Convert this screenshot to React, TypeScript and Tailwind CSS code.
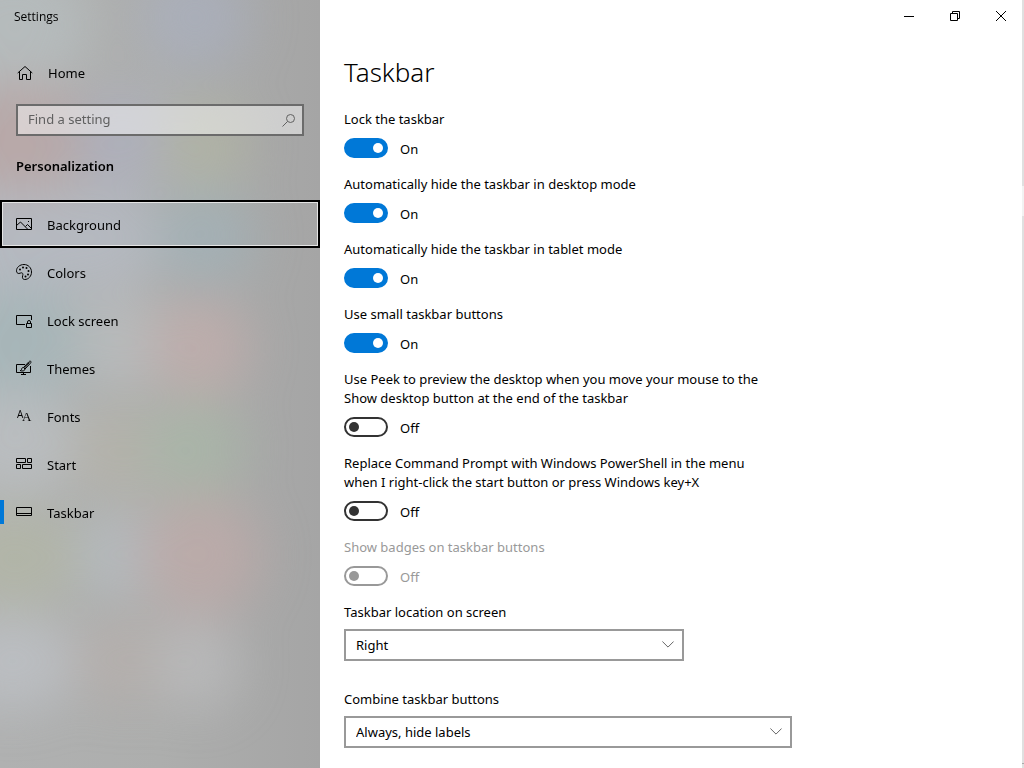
import type { ReactNode } from 'react';

interface NavItem { label: string; icon: ReactNode; current?: boolean; focused?: boolean; }
interface Toggle { id: string; label: string; on?: boolean; disabled?: boolean; }

function Icon({ children }: { children: ReactNode }) {
  return (
    <svg viewBox="0 0 16 16" className="w-4 h-4 shrink-0 overflow-visible" fill="none" stroke="currentColor" strokeWidth="1" aria-hidden="true">
      {children}
    </svg>
  );
}

const navItems: NavItem[] = [
  {
    label: 'Background',
    focused: true,
    icon: (
      <Icon>
        <path d="M.5 2.500h15v11H.5z" />
        <path d="M.5 9.500 4.500 6l7.500 7.500M9.500 10.500l2-2 4 4" />
        <path d="M12 5h1v1h-1z" fill="currentColor" stroke="none" />
      </Icon>
    ),
  },
  {
    label: 'Colors',
    icon: (
      <Icon>
        <path d="M8 .5C3.800.5.500 3.300.500 6.800c0 1.600.9 2.700 2.300 2.700 1.200 0 1.600-.7 2.600-.7 1.100 0 1.500.8 1.500 1.700 0 1-.5 1.500-.5 2.700 0 1.400 1 2.300 2.300 2.300 3.800 0 6.800-3.300 6.800-7.500S12.200.5 8 .5z" />
        <g fill="currentColor" stroke="none">
          <circle cx="4" cy="5.500" r="1" />
          <circle cx="7" cy="3.500" r="1" />
          <circle cx="10.500" cy="4" r="1" />
          <circle cx="12.500" cy="7" r="1" />
          <circle cx="12" cy="10.500" r="1" />
          <circle cx="9.500" cy="12.500" r="1" />
        </g>
      </Icon>
    ),
  },
  {
    label: 'Lock screen',
    icon: (
      <Icon>
        <path d="M9 12.500H.5v-9h15V8" />
        <path d="M10.500 11.500h5v4h-5z" />
        <path d="M11.500 11.500V10a1.500 1.500 0 0 1 3 0v1.500" />
      </Icon>
    ),
  },
  {
    label: 'Themes',
    icon: (
      <Icon>
        <path d="M9 4.500H.5v8h14V6M7.500 12.500v2M5 14.500h5" />
        <path d="M14.700 1.300c-.7-.5-1.300 0-2 .7L7.500 7.500l1.500 1.500 5.300-5.600c.6-.7 1-1.500.4-2.100z" />
        <path d="M7.500 7.500c-1.500 0-2 1-2 2s-.8 1-1.500 1c2 1 5 .5 5-1.500" />
        <path d="m13.500 2.500-5 5.500" />
      </Icon>
    ),
  },
  {
    label: 'Fonts',
    icon: (
      <svg viewBox="0 0 16 16" className="w-4 h-4 shrink-0 overflow-visible" fill="currentColor" aria-hidden="true">
        <text x="1" y="10" fontSize="10" fontFamily="Open Sans, sans-serif">A</text>
        <text x="6" y="13" fontSize="13" fontFamily="Liberation Serif, serif">A</text>
      </svg>
    ),
  },
  {
    label: 'Start',
    icon: (
      <Icon>
        <path d="M.5 2.500h9v4h-9zM11.500 2.500h4v4h-4zM.5 8.500h4v4h-4zM6.500 8.500h9v4h-9z" />
      </Icon>
    ),
  },
  {
    label: 'Taskbar',
    current: true,
    icon: (
      <Icon>
        <path d="M.5 3.500h15v8H.5zM.5 9.500h15" />
      </Icon>
    ),
  },
];

const toggles: Toggle[] = [
  { id: 'lock', label: 'Lock the taskbar', on: true },
  { id: 'hide-desktop', label: 'Automatically hide the taskbar in desktop mode', on: true },
  { id: 'hide-tablet', label: 'Automatically hide the taskbar in tablet mode', on: true },
  { id: 'small-buttons', label: 'Use small taskbar buttons', on: true },
  { id: 'peek', label: 'Use Peek to preview the desktop when you move your mouse to the Show desktop button at the end of the taskbar' },
  { id: 'powershell', label: 'Replace Command Prompt with Windows PowerShell in the menu when I right-click the start button or press Windows key+X' },
  { id: 'badges', label: 'Show badges on taskbar buttons', disabled: true },
];

// soft colours of the desktop showing through the acrylic sidebar
const glows = [
  'left-[-60px] top-[-40px] w-[150px] h-[130px] bg-[#b9c2c4]',
  'left-[140px] top-[-35px] w-[110px] h-[105px] bg-[#a9b0c2]',
  'left-[-60px] top-[85px] w-[150px] h-[110px] bg-[#bda3a3]',
  'left-[75px] top-[90px] w-[100px] h-[100px] bg-[#aeb0c3]',
  'left-[160px] top-[100px] w-[90px] h-[90px] bg-[#b3b7a2]',
  'left-[-50px] top-[190px] w-[210px] h-[100px] bg-[#b9bfcb]',
  'left-[155px] top-[190px] w-[100px] h-[95px] bg-[#9fb3bb]',
  'left-[-60px] top-[290px] w-[150px] h-[105px] bg-[#a1b9be]',
  'left-[75px] top-[295px] w-[90px] h-[95px] bg-[#bec2c4]',
  'left-[148px] top-[296px] w-[102px] h-[102px] bg-[#c8aeac]',
  'left-[-50px] top-[390px] w-[130px] h-[105px] bg-[#c0c5c9]',
  'left-[70px] top-[405px] w-[95px] h-[95px] bg-[#b7b4a8]',
  'left-[145px] top-[400px] w-[100px] h-[95px] bg-[#a8baa6]',
  'left-[-50px] top-[510px] w-[130px] h-[95px] bg-[#b3b8a2]',
  'left-[75px] top-[510px] w-[85px] h-[90px] bg-[#b8c0c6]',
  'left-[140px] top-[494px] w-[122px] h-[122px] bg-[#c4aaa8]',
  'left-[-50px] top-[615px] w-[125px] h-[95px] bg-[#c2c6cc]',
  'left-[75px] top-[615px] w-[95px] h-[90px] bg-[#b8afab]',
  'left-[155px] top-[620px] w-[85px] h-[90px] bg-[#c0c0c2]',
];

function ToggleRow({ id, label, on, disabled }: Toggle) {
  return (
    <div className={disabled ? 'mb-[17px] text-[#999]' : 'mb-[17px]'}>
      <label htmlFor={id} className="block leading-[19px] mb-[9px]">{label}</label>
      <div className="flex items-center gap-3 h-5">
        <input
          id={id}
          type="checkbox"
          role="switch"
          defaultChecked={on}
          disabled={disabled}
          className="appearance-none flex items-center w-11 h-5 px-[3px] rounded-full border-2 border-[#333] checked:justify-end checked:bg-[#0078d7] checked:border-[#0078d7] disabled:border-[#999] before:w-[10px] before:h-[10px] before:rounded-full before:bg-[#333] checked:before:bg-white disabled:before:bg-[#999]"
        />
        <span className="pt-1">{on ? 'On' : 'Off'}</span>
      </div>
    </div>
  );
}

function SelectBox({ id, label, options, width }: { id: string; label: string; options: string[]; width: string }) {
  return (
    <div className="mb-[29px] last:mb-0">
      <label htmlFor={id} className="block leading-[19px] mb-[7px]">{label}</label>
      <div className={`relative max-w-full ${width}`}>
        <select id={id} className="appearance-none w-full h-8 pt-0.5 pl-[10px] pr-8 border-2 border-[#999] bg-white">
          {options.map((o) => <option key={o}>{o}</option>)}
        </select>
        <svg viewBox="0 0 12 7" className="absolute right-[10px] top-3 w-3 h-[7px] pointer-events-none" fill="none" stroke="#666" aria-hidden="true">
          <path d="M.4.5 6 6.100 11.600.5" />
        </svg>
      </div>
    </div>
  );
}

export default function App() {
  return (
    <div className="relative flex min-h-screen bg-white text-black text-[13px] font-['Noto_Sans','Open_Sans',sans-serif]">
      <aside className="relative w-80 shrink-0 overflow-hidden bg-[#a8a8a8]">
        <div className="absolute inset-0 bg-linear-to-r from-[#b0b1b1] via-[#adaead] to-[#a5a5a5]" aria-hidden="true">
          <div className="absolute inset-0 blur-xl opacity-60">
            {glows.map((g) => <div key={g} className={`absolute rounded-full ${g}`} />)}
          </div>
        </div>

        <div className="relative">
          <div className="h-[49px] px-[14px] pt-2 text-xs leading-[18px] font-['Open_Sans',sans-serif]">Settings</div>
          <a href="#home" className="flex items-center gap-4 h-12 px-4">
            <Icon>
              <path d="M1.700 8 9 1.500 16.300 8M3.500 6.500v8h3v-5h4v5h4v-8" />
            </Icon>
            <span className="pt-0.5">Home</span>
          </a>

          <div className="mx-4 mt-[7px] flex items-center h-8 border-2 border-[#6b6b6b] bg-white/45">
            <input
              type="search"
              aria-label="Find a setting"
              placeholder="Find a setting"
              className="flex-1 min-w-0 px-[10px] bg-transparent outline-none placeholder:text-[#606060]"
            />
            <svg viewBox="0 0 14 14" className="w-[14px] h-[14px] mr-1.5" fill="none" stroke="#606060" aria-hidden="true">
              <circle cx="8.500" cy="5.500" r="4" />
              <path d="M5.500 8.500.500 13.500" />
            </svg>
          </div>

          <h2 className="px-4 mt-5 mb-6 leading-5 font-semibold">Personalization</h2>

          <nav>
            {navItems.map((item) => (
              <a
                key={item.label}
                href={`#${item.label}`}
                aria-current={item.current ? 'page' : undefined}
                className={item.focused
                  ? 'relative flex items-center h-12 px-4 gap-[15px] outline-2 -outline-offset-2 outline-black inset-ring-3 inset-ring-[#e4e4e4]'
                  : 'relative flex items-center h-12 px-4 gap-[15px]'}
              >
                {item.current && <span className="absolute left-0 top-3 w-1 h-6 bg-[#0078d7]" />}
                {item.icon}
                <span className="pt-1">{item.label}</span>
              </a>
            ))}
          </nav>
        </div>
      </aside>

      <main className="flex-1 min-w-0">
        <div className="flex justify-end h-8">
          <button aria-label="Minimize" className="w-[46px] flex items-center justify-center">
            <svg viewBox="0 0 10 10" className="w-[10px] h-[10px]" fill="none" stroke="#000"><path d="M0 5.500h10" /></svg>
          </button>
          <button aria-label="Restore" className="w-[46px] flex items-center justify-center">
            <svg viewBox="0 0 10 10" className="w-[10px] h-[10px]" fill="none" stroke="#000"><path d="M.5 2.500h7v7h-7zM2.500 2.500v-2h7v7h-2" /></svg>
          </button>
          <button aria-label="Close" className="w-[46px] flex items-center justify-center">
            <svg viewBox="0 0 10 10" className="w-[10px] h-[10px]" fill="none" stroke="#000"><path d="m0 0 10 10M10 0 0 10" /></svg>
          </button>
        </div>

        <div className="px-6 pt-5 pb-5">
          <h1 className="text-[26px] leading-10 font-light mb-[18px]">Taskbar</h1>
          <div className="max-w-[425px]">
            {toggles.map((t) => <ToggleRow key={t.id} {...t} />)}
          </div>
          <SelectBox id="location" label="Taskbar location on screen" options={['Right', 'Left', 'Top', 'Bottom']} width="w-[340px]" />
          <SelectBox id="combine" label="Combine taskbar buttons" options={['Always, hide labels', 'When taskbar is full', 'Never']} width="w-[448px]" />
        </div>
      </main>

      <div className="absolute right-0 inset-y-0 w-0.5 flex flex-col bg-[#e0e0e0]" aria-hidden="true">
        <div className="mt-[186px] h-[30px] bg-[#f2f2f2]" />
        <div className="mt-auto mb-1 h-px bg-[#aaa]" />
      </div>
    </div>
  );
}
